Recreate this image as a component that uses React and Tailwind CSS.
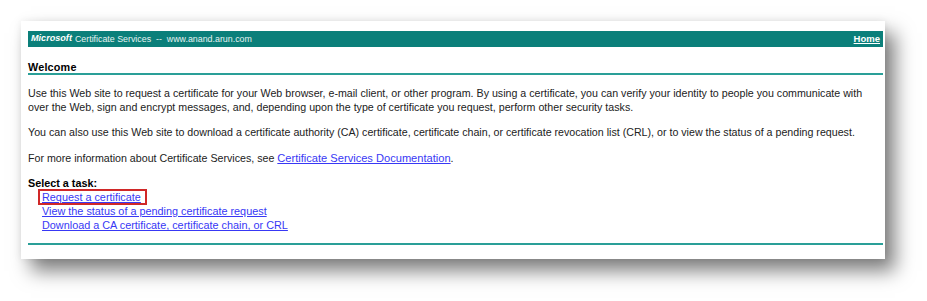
export default function App() {
  return (
    <div className="w-[927px] h-[301px] bg-white overflow-hidden relative" style={{ fontFamily: '"Liberation Sans", Arial, sans-serif' }}>
      <div className="absolute left-[21px] top-[21px] w-[864px] h-[238px] bg-white shadow-[10px_12px_18px_rgba(0,0,0,0.5),0_0_8px_rgba(0,0,0,0.08)]">
        <div className="pl-[7px] pr-[2px] pt-[10px] flex flex-col">
          <div className="h-[16px] bg-[#0b7f7a] flex items-center justify-between px-[3px] text-white text-[8.85px] leading-none">
            <div className="flex items-center">
              <span className="font-bold italic text-[9.1px]">Microsoft</span>
              <span className="ml-[3px] text-[#e6f2f1]">Certificate Services&nbsp; --&nbsp; www.anand.arun.com</span>
            </div>
            <span className="font-bold underline text-[9.5px]">Home</span>
          </div>
          <div className="mt-[14px] text-[10.8px] font-bold text-black leading-[12px] tracking-[0.2px]">Welcome</div>
          <div className="h-[2px] bg-[#2a9f98]" />
          <div className="mt-[11px] text-[10.66px] leading-[14px] text-[#222]">
            Use this Web site to request a certificate for your Web browser, e-mail client, or other program. By using a certificate, you can verify your identity to people you communicate with over the Web, sign and encrypt messages, and, depending upon the type of certificate you request, perform other security tasks.
          </div>
          <div className="mt-[11px] text-[10.66px] leading-[14px] text-[#222]">
            You can also use this Web site to download a certificate authority (CA) certificate, certificate chain, or certificate revocation list (CRL), or to view the status of a pending request.
          </div>
          <div className="mt-[12px] text-[10.66px] leading-[14px] text-[#222]">
            For more information about Certificate Services, see <span className="text-[#3838f5] underline text-[11.1px]">Certificate Services Documentation</span>.
          </div>
          <div className="mt-[11px] text-[10.8px] leading-[14px] font-bold text-black">Select a task:</div>
          <div className="flex flex-col items-start pl-[11px] text-[10.85px] leading-[14px] text-[#3838f5]">
            <span className="underline outline outline-[2px] outline-[#d02828] outline-offset-[-1px] pl-[3px] pr-[5px]">Request a certificate</span>
            <span className="underline pl-[3px]">View the status of a pending certificate request</span>
            <span className="underline pl-[3px]">Download a CA certificate, certificate chain, or CRL</span>
          </div>
          <div className="mt-[11px] h-[2px] bg-[#2a9f98]" />
        </div>
      </div>
    </div>
  );
}
